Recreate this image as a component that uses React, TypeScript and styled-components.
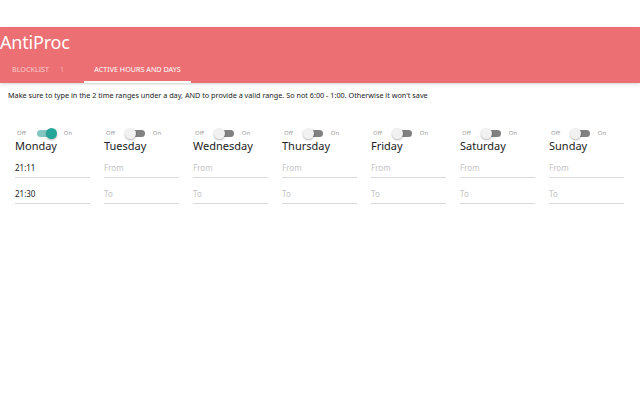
import styled, { createGlobalStyle } from "styled-components";

const GlobalStyle = createGlobalStyle`
	html, body {
		margin: 0;
		padding: 0;
		background: #ffffff;
		font-family: "Noto Sans", "Open Sans", sans-serif;
	}
`;

const Page = styled.div`
	padding-top: 27px;
	width: 640px;
`;

const Header = styled.header`
	background: #ec6f73;
	height: 56px;
	box-shadow: 0 1px 3px rgba(0, 0, 0, 0.18);
	display: flex;
	flex-direction: column;
`;

const Title = styled.h1`
	margin: 0;
	height: 30px;
	line-height: 30px;
	font-size: 18px;
	font-weight: 400;
	color: #ffffff;
	letter-spacing: -0.2px;
`;

const TabBar = styled.nav`
	display: flex;
	height: 26px;
`;

const Tab = styled.div<{ $active?: boolean; $width: number }>`
	width: ${(p) => p.$width}px;
	display: flex;
	align-items: center;
	justify-content: ${(p) => (p.$active ? "center" : "flex-start")};
	padding-left: ${(p) => (p.$active ? 0 : 12)}px;
	box-sizing: border-box;
	font-size: 7.2px;
	text-transform: uppercase;
	color: ${(p) => (p.$active ? "#ffffff" : "rgba(255, 255, 255, 0.65)")};
	border-bottom: 2px solid ${(p) => (p.$active ? "#ffffff" : "transparent")};
`;

const Badge = styled.span`
	margin-left: 11px;
	color: rgba(255, 255, 255, 0.45);
`;

const Note = styled.p`
	margin: 6px 0 0 8px;
	font-size: 7.25px;
	color: #222222;
	line-height: 12px;
`;

const DayGrid = styled.div`
	display: grid;
	grid-template-columns: repeat(7, 75px);
	column-gap: 14px;
	padding: 26px 0 0 15px;
`;

const DayColumn = styled.div`
	display: flex;
	flex-direction: column;
`;

const SwitchRow = styled.div`
	display: flex;
	align-items: center;
	height: 12px;
	font-size: 6px;
	color: #9e9e9e;
`;

const SwitchLabel = styled.span<{ $side: "off" | "on" }>`
	margin-left: ${(p) => (p.$side === "off" ? 2 : 8)}px;
	margin-right: ${(p) => (p.$side === "off" ? 11 : 0)}px;
`;

const Lever = styled.span<{ $on: boolean }>`
	position: relative;
	width: 19px;
	height: 7px;
	border-radius: 4px;
	background: ${(p) => (p.$on ? "#84c7c1" : "#818181")};

	&::after {
		content: "";
		position: absolute;
		top: -2px;
		left: ${(p) => (p.$on ? 9 : -1)}px;
		width: 11px;
		height: 11px;
		border-radius: 50%;
		background: ${(p) => (p.$on ? "#26a69a" : "#f1f1f1")};
		box-shadow: 0 1px 2px rgba(0, 0, 0, 0.3);
	}
`;

const DayName = styled.div`
	font-size: 11px;
	line-height: 14px;
	color: #222222;
`;

const Fields = styled.div`
	display: flex;
	flex-direction: column;
	gap: 5px;
	margin-top: 4px;
`;

const TimeField = styled.div<{ $filled: boolean }>`
	height: 20px;
	display: flex;
	align-items: center;
	font-size: 8px;
	color: ${(p) => (p.$filled ? "#222222" : "#c4c4c4")};
	border-bottom: 1.5px solid #d9d9d9;
`;

type Day = { name: string; on: boolean; from?: string; to?: string };

const days: Day[] = [
	{ name: "Monday", on: true, from: "21:11", to: "21:30" },
	{ name: "Tuesday", on: false },
	{ name: "Wednesday", on: false },
	{ name: "Thursday", on: false },
	{ name: "Friday", on: false },
	{ name: "Saturday", on: false },
	{ name: "Sunday", on: false },
];

export default function App() {
	return (
		<Page>
			<GlobalStyle />
			<Header>
				<Title>AntiProc</Title>
				<TabBar>
					<Tab $width={84}>
						Blocklist<Badge>1</Badge>
					</Tab>
					<Tab $active $width={107}>
						Active hours and days
					</Tab>
				</TabBar>
			</Header>
			<Note>
				Make sure to type in the 2 time ranges under a day, AND to provide a valid range. So not 6:00 - 1:00.
				Otherwise it won't save
			</Note>
			<DayGrid>
				{days.map((day) => (
					<DayColumn key={day.name}>
						<SwitchRow>
							<SwitchLabel $side="off">Off</SwitchLabel>
							<Lever $on={day.on} />
							<SwitchLabel $side="on">On</SwitchLabel>
						</SwitchRow>
						<DayName>{day.name}</DayName>
						<Fields>
							<TimeField $filled={!!day.from}>{day.from ?? "From"}</TimeField>
							<TimeField $filled={!!day.to}>{day.to ?? "To"}</TimeField>
						</Fields>
					</DayColumn>
				))}
			</DayGrid>
		</Page>
	);
}
